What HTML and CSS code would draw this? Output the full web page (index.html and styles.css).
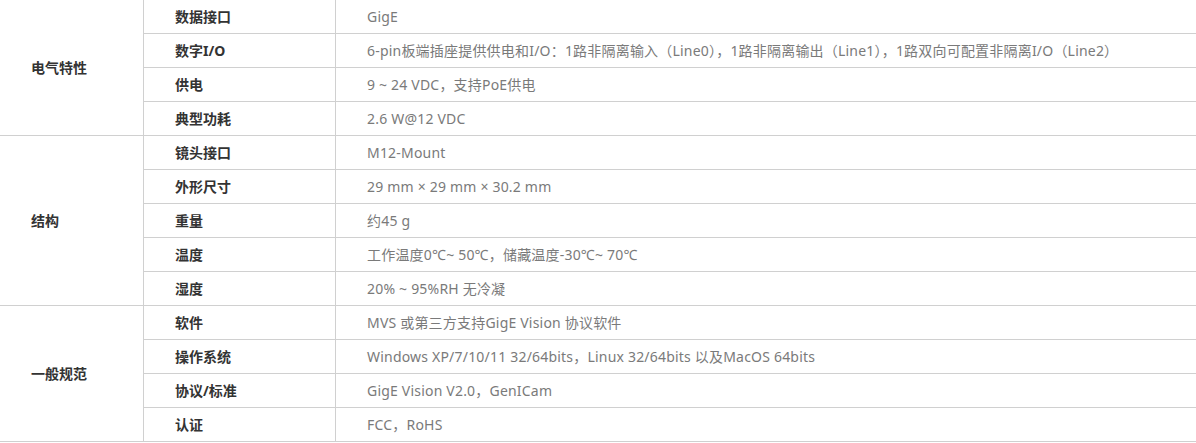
FILE: index.html
```html
<!DOCTYPE html>
<html lang="zh-CN">
<head>
<meta charset="utf-8">
<title>规格参数</title>
<link rel="stylesheet" href="styles.css">
</head>
<body>
<table class="spec">
  <colgroup>
    <col class="c-cat">
    <col class="c-key">
    <col class="c-val">
  </colgroup>
  <tbody>
    <tr>
      <td class="cat" rowspan="4">电气特性</td>
      <td class="key">数据接口</td>
      <td class="val">GigE</td>
    </tr>
    <tr>
      <td class="key">数字I/O</td>
      <td class="val">6-pin板端插座提供供电和I/O：1路非隔离输入（Line0），1路非隔离输出（Line1），1路双向可配置非隔离I/O（Line2）</td>
    </tr>
    <tr>
      <td class="key">供电</td>
      <td class="val">9 ~ 24 VDC，支持PoE供电</td>
    </tr>
    <tr>
      <td class="key">典型功耗</td>
      <td class="val">2.6 W@12 VDC</td>
    </tr>
    <tr>
      <td class="cat" rowspan="5">结构</td>
      <td class="key">镜头接口</td>
      <td class="val">M12-Mount</td>
    </tr>
    <tr>
      <td class="key">外形尺寸</td>
      <td class="val">29 mm × 29 mm × 30.2 mm</td>
    </tr>
    <tr>
      <td class="key">重量</td>
      <td class="val">约45 g</td>
    </tr>
    <tr>
      <td class="key">温度</td>
      <td class="val">工作温度0℃~ 50℃，储藏温度-30℃~ 70℃</td>
    </tr>
    <tr>
      <td class="key">湿度</td>
      <td class="val">20% ~ 95%RH 无冷凝</td>
    </tr>
    <tr>
      <td class="cat" rowspan="4">一般规范</td>
      <td class="key">软件</td>
      <td class="val">MVS 或第三方支持GigE Vision 协议软件</td>
    </tr>
    <tr>
      <td class="key">操作系统</td>
      <td class="val">Windows XP/7/10/11 32/64bits，Linux 32/64bits 以及MacOS 64bits</td>
    </tr>
    <tr>
      <td class="key">协议/标准</td>
      <td class="val">GigE Vision V2.0，GenICam</td>
    </tr>
    <tr>
      <td class="key">认证</td>
      <td class="val">FCC，RoHS</td>
    </tr>
  </tbody>
</table>
</body>
</html>
```

FILE: styles.css
```css
html, body {
  margin: 0;
  padding: 0;
  background: #fff;
}

.spec {
  width: 1196px;
  table-layout: fixed;
  border-collapse: separate;
  border-spacing: 0;
  font-family: "Noto Sans", "Noto Sans CJK SC", sans-serif;
  font-size: 14px;
}

.c-cat { width: 143px; }
.c-key { width: 192px; }

.spec td {
  height: 33px;
  line-height: 33px;
  padding: 0 0 0 31px;
  border-bottom: 1px solid #d0d0d0;
  white-space: nowrap;
  vertical-align: middle;
}

.spec td.key,
.spec td.val {
  border-left: 1px solid #d0d0d0;
}

.cat,
.key {
  color: #333;
  font-weight: bold;
}

.val {
  color: #7a7a7a;
  letter-spacing: 0.2px;
}
```
